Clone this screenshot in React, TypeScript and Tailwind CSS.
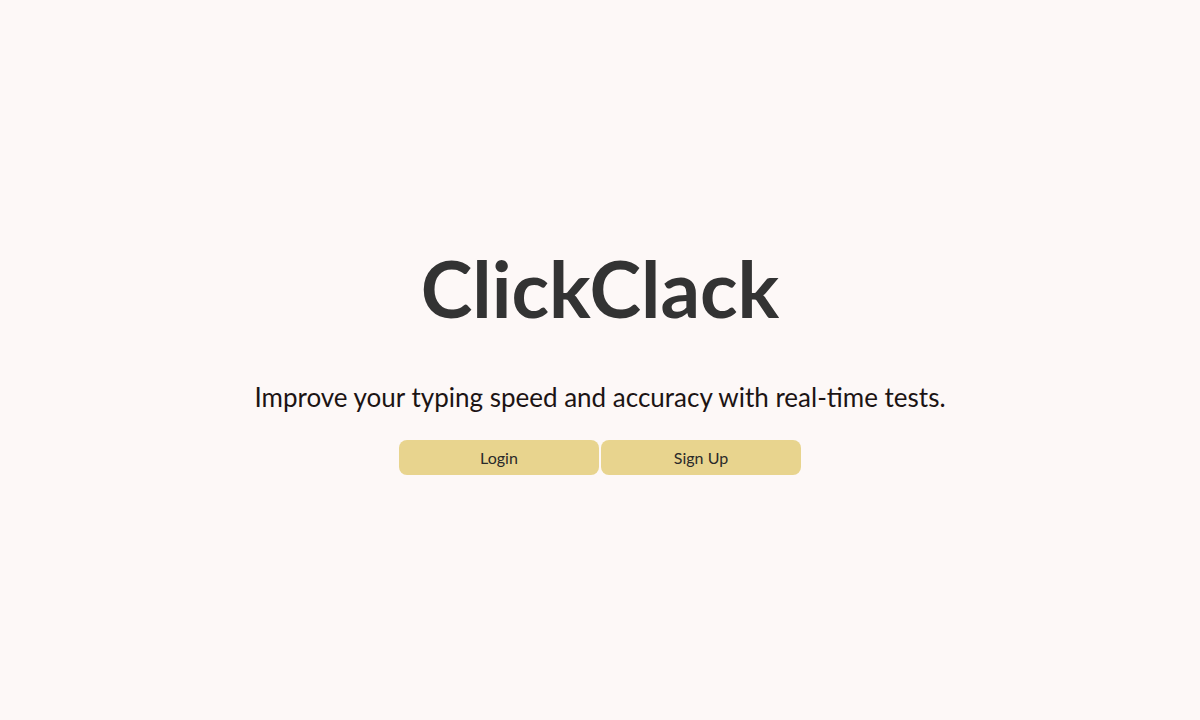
export default function App() {
  return (
    <div
      className="flex h-[720px] w-full flex-col items-center justify-center bg-[#fdf8f7]"
      style={{ fontFamily: "Lato, 'Open Sans', sans-serif" }}
    >
      <h1 className="mt-[4px] text-[78px] font-bold leading-none text-[#333333]">ClickClack</h1>
      <p className="mt-[57px] text-[26px] leading-none text-[#1c1414]">
        Improve your typing speed and accuracy with real-time tests.
      </p>
      <div className="mt-[30px] flex gap-[2px]">
        <button className="h-[35px] w-[200px] rounded-lg bg-[#e8d48e] text-base text-[#2a2a2a]">Login</button>
        <button className="h-[35px] w-[200px] rounded-lg bg-[#e8d48e] text-base text-[#2a2a2a]">Sign Up</button>
      </div>
    </div>
  );
}
